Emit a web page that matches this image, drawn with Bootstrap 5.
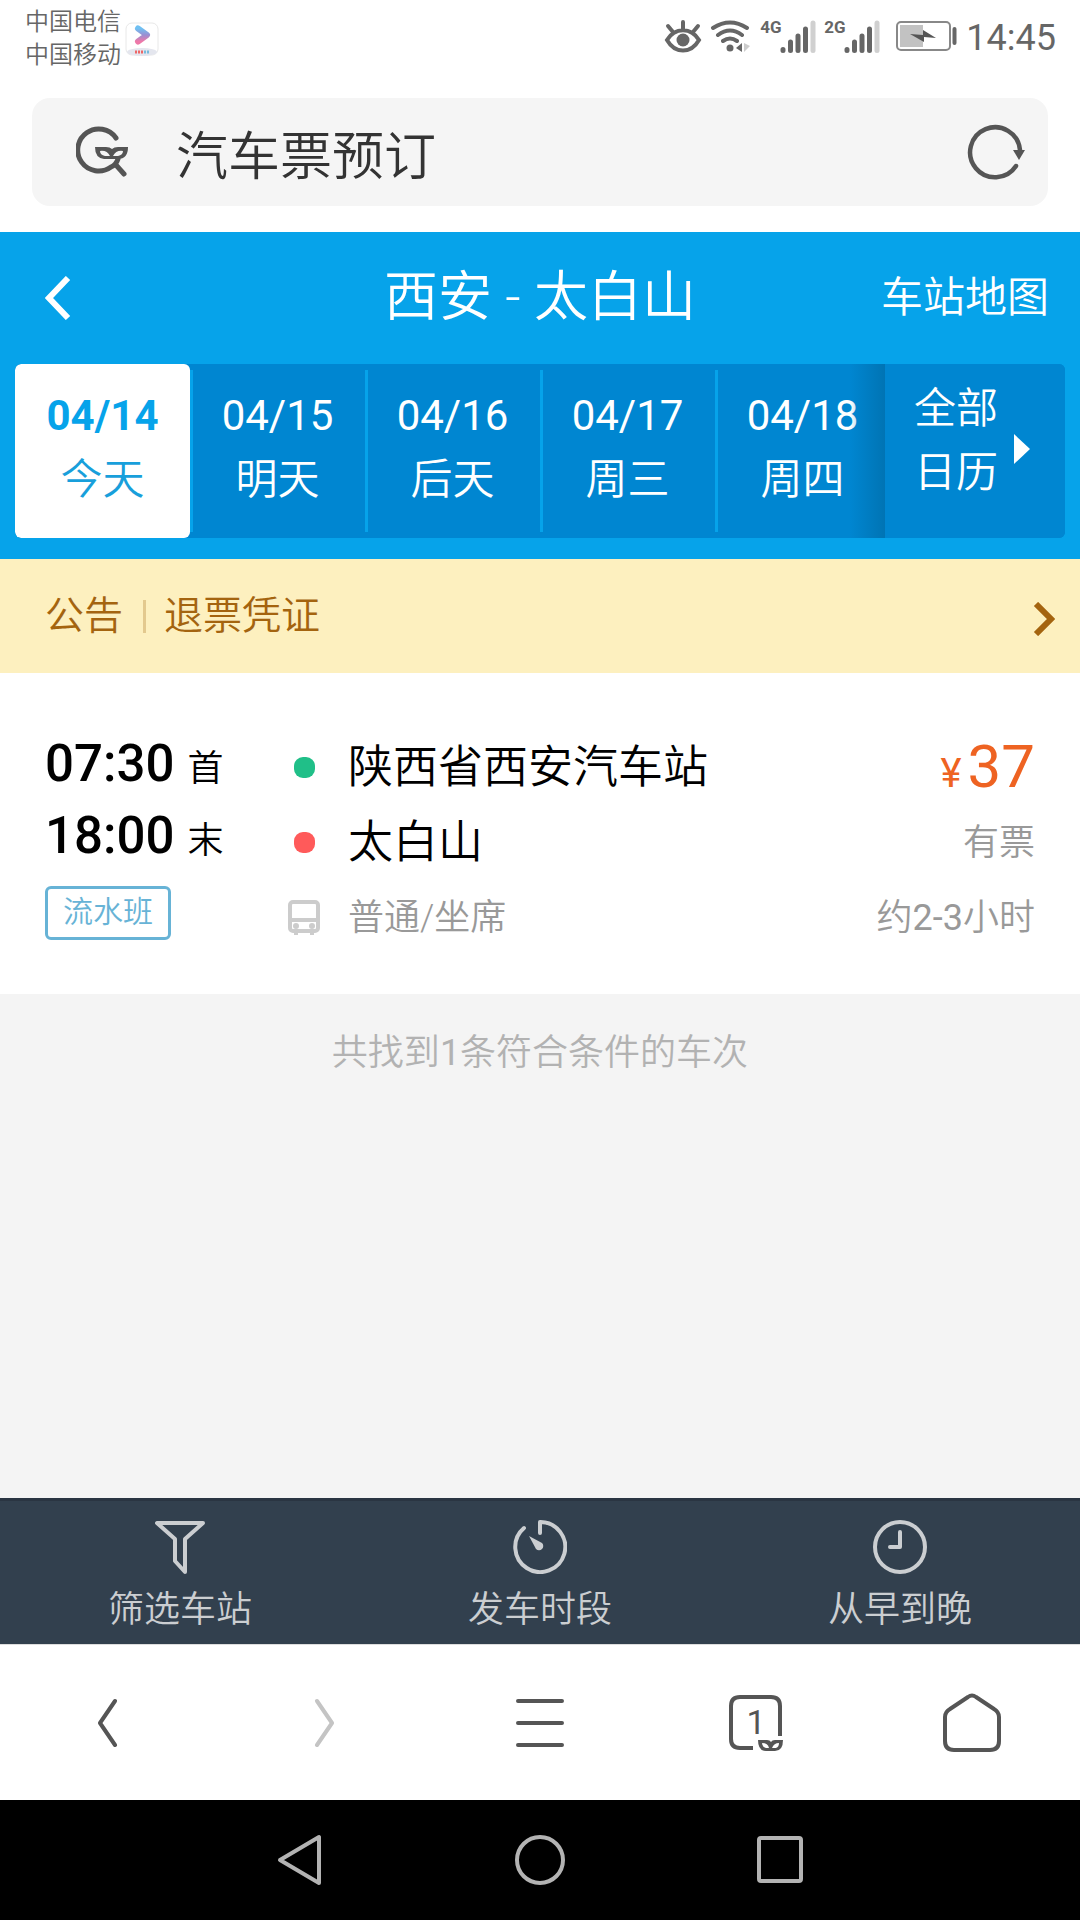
<!DOCTYPE html>
<html lang="zh-CN">
<head>
<meta charset="utf-8">
<meta name="viewport" content="width=device-width, initial-scale=1">
<title>汽车票预订</title>
<link href="https://cdn.jsdelivr.net/npm/bootstrap@5.3.0/dist/css/bootstrap.min.css" rel="stylesheet">
<style>
body{font-family:Roboto,"Noto Sans CJK SC",sans-serif;font-size:36px;line-height:48px;color:#000;background:#f4f4f4}
svg{display:block;flex:none}
button{background:none;border:0;padding:0;color:inherit;line-height:inherit;display:flex;align-items:center;justify-content:center}
a{color:inherit;text-decoration:none}
.cn{font-weight:350}
.status{height:74px;padding:6px 24px 0 25px;color:#666}
.carriers{font-size:24px;line-height:33px}
.clock{font-size:36px;padding-top:3px}
.net{font:700 17px/20px Roboto,sans-serif;width:20px;margin:11px 0 0 8px}
.search-wrap{padding:24px 32px 26px}
.search{height:108px;border-radius:18px;background:#f5f5f5;padding:0 22px 0 44px;color:#555}
.search input{font-size:52px;line-height:60px;color:#333;border:0;background:none;outline:0;padding:12px 0 0;margin-left:46px;min-width:0}
.topbar{background:#06a3ea;color:#fff;padding:0 15px 21px}
.title-row{height:132px;padding:0 16px}
.title-row h1{font-size:54px;line-height:60px;margin:0}
.back{padding-left:14px}
.f42{font-size:42px}
.dates{background:#0086d1;border-radius:6px;height:174px;overflow:hidden}
.strip{margin-right:-10px}
.day{font-size:42px;line-height:64px;padding-bottom:6px;flex:1 1 0;flex-direction:column;background:linear-gradient(#06a3ea,#06a3ea) 0 6px/3px calc(100% - 12px) no-repeat}
.day.on{background:#fff;color:#189fdb;border-radius:6px}
.day.on b{font-weight:700;color:#06a3ea}
.all{width:215px;padding-left:35px;font-size:42px;line-height:64px;background:linear-gradient(90deg,#0086d100,#0074b4) 0 0/35px 100% no-repeat;margin-left:-30px;position:relative}
.all-in{background:#0086d1;height:174px;width:180px;gap:16px;padding:0 6px 20px 0}
.all-in svg{margin-top:16px}
.notice{background:#fdf0bf;color:#a4640f;height:114px;padding:0 25px 0 45px;font-size:39px}
.notice svg{margin-top:5px}
.bar{width:3px;height:33px;background:#e3c98e;margin:0 18px 0 20px}
.trip{background:#fff;padding:55px 45px 39px}
.times{width:243px;font-size:51px;line-height:72px;font-weight:500}
.times small{font-size:36px;line-height:36px;margin-left:13px}
.tag{border:3px solid #67b3d6;border-radius:6px;color:#67b3d6;font-size:30px;line-height:46px;padding:0 15px 2px;margin-top:14px}
.stops{padding-top:2px}
.stop{height:75px;font-size:45px}
.mark-col{width:32px;margin-right:28px}
.dot{width:21px;height:21px;border-radius:9px}
.dot.from{background:#20bf88}
.dot.to{background:#ff5a5a}
.fs-36{font-size:36px}
.muted{color:#999}
.cost{color:#ee6322;padding-top:6px}
.cost b{font-size:60px;font-weight:400}
.cost i{font-size:40px;font-style:normal;margin-right:6px}
.count{color:#b2b2b2;padding-top:35px}
.filters{background:#32404e;border-top:3px solid #2a3542;height:146px;color:#cbced1}
.filters button{flex-direction:column;gap:12px;padding-top:9px}
.browser{height:156px;background:#fff;border-top:1px solid #ddd;color:#555}
.sysnav{height:120px;background:#000;gap:190px;color:#b3b3b3}
</style>
</head>
<body class="d-flex flex-column min-vh-100">
<header class="bg-white">
  <div class="status d-flex justify-content-between">
    <div class="d-flex align-items-start">
      <div class="carriers cn">中国电信<br>中国移动</div>
      <svg class="ms-1 mt-3" width="35" height="35" viewBox="0 0 35 35"><defs><linearGradient id="p" x1="0" y1="0" x2="0" y2="1"><stop offset="0" stop-color="#6fc0f2"/><stop offset=".5" stop-color="#9a8fd2"/><stop offset="1" stop-color="#ee78a8"/></linearGradient></defs><rect x="1" y="1" width="32" height="32" rx="6" fill="#fff" stroke="#e8e8e8"/><path d="M13 6.500 22 13 13 19.500" fill="none" stroke="url(#p)" stroke-width="6" stroke-linecap="round" stroke-linejoin="round"/><ellipse cx="17" cy="30" rx="15" ry="4" fill="#e4e6ee"/><path d="M10 30h8" stroke="#e66" stroke-width="3" stroke-dasharray="2 1"/><path d="M19 30h6" stroke="#7bd" stroke-width="3" stroke-dasharray="2 1"/></svg>
    </div>
    <div class="d-flex align-items-center pb-2">
      <svg width="38" height="36" viewBox="0 0 38 36" fill="none" stroke="currentColor" stroke-width="4" stroke-linecap="round"><path d="M3 22C11 9 27 9 35 22 27 36 11 36 3 22ZM19 12V4M9 14 4 8M29 14l5-6"/><circle cx="19" cy="22" r="6.500" fill="currentColor" stroke="none"/></svg>
      <svg class="ms-2" width="42" height="36" viewBox="0 0 42 36" fill="none" stroke="currentColor" stroke-width="4" stroke-linecap="round"><path d="M3 10Q20 -1 37 10M8 17Q20 8 32 17M13 23Q20 18 27 23"/><circle cx="20" cy="30" r="3.500" fill="currentColor" stroke="none"/><path d="M32 25v9l-6-4z" fill="currentColor" stroke="none"/><path d="M34 25v9l6-6z" fill="#ccc" stroke="none"/></svg>
      <span class="net align-self-start">4G</span>
      <svg width="36" height="36" viewBox="0 0 36 36" stroke="currentColor" stroke-width="5" stroke-linecap="round"><path d="M3 31.500v1M10.500 24v8.500M18 18v14.500M25.500 11v21.500"/><path d="M33 5v27.500" stroke="#d0d0d0"/></svg>
      <span class="net align-self-start">2G</span>
      <svg width="36" height="36" viewBox="0 0 36 36" stroke="currentColor" stroke-width="5" stroke-linecap="round"><path d="M3 31.500v1M10.500 24v8.500M18 18v14.500M25.500 11v21.500"/><path d="M33 5v27.500" stroke="#d0d0d0"/></svg>
      <svg class="ms-3" width="62" height="30" viewBox="0 0 62 30"><rect x="1" y="1" width="53" height="28" rx="4" fill="none" stroke="#888" stroke-width="2"/><path d="M4 4h23v22H4z" fill="#c2c2c2"/><path d="M14 13 27 14V9L40 17 28 16V21Z" fill="#555"/><path d="M58.500 8v14" stroke="#666" stroke-width="4" stroke-linecap="round"/></svg>
      <time class="clock ms-2">14:45</time>
    </div>
  </div>
  <div class="search-wrap">
    <form class="search d-flex align-items-center">
      <label for="q" aria-label="搜索"><svg width="54" height="54" viewBox="0 0 54 54" fill="none" stroke="currentColor" stroke-width="5" stroke-linecap="round"><path d="M40 13A21 21 0 1 0 35 42Q40 40 42 34M40 40l8 9"/><path fill="currentColor" stroke="none" d="M19 22H30Q34 22 36 24 38 22 42 22H52Q52 34 42 34H28Q19 33 19 22Z"/><path fill="#f5f5f5" stroke="none" d="M24 26Q31 25 34 31H29Q24 30 24 26ZM47 26Q40 25 37 31H42Q47 30 47 26Z"/></svg></label>
      <input id="q" class="flex-grow-1 cn" type="text" value="汽车票预订">
      <button type="button" aria-label="刷新"><svg width="60" height="56" viewBox="0 0 60 56"><path d="M50 42A25 25 0 1 1 54 26" fill="none" stroke="currentColor" stroke-width="4.500" stroke-linecap="round"/><path d="M47 26h12l-6 10z" fill="currentColor"/></svg></button>
    </form>
  </div>
</header>
<section class="topbar">
  <div class="title-row row g-0 align-items-center">
    <div class="col-3 back"><a href="#" aria-label="返回"><svg width="26" height="44" viewBox="0 0 26 44"><path d="M23 2 4 22 23 42" fill="none" stroke="#fff" stroke-width="6"/></svg></a></div>
    <h1 class="col-6 text-center cn">西安 - 太白山</h1>
    <div class="col-3 text-end f42 cn"><a href="#">车站地图</a></div>
  </div>
  <div class="dates d-flex">
    <div class="strip d-flex flex-grow-1">
      <button class="day on"><b>04/14</b><span class="cn">今天</span></button>
      <button class="day"><span>04/15</span><span class="cn">明天</span></button>
      <button class="day"><span>04/16</span><span class="cn">后天</span></button>
      <button class="day"><span>04/17</span><span class="cn">周三</span></button>
      <button class="day"><span>04/18</span><span class="cn">周四</span></button>
    </div>
    <button class="all"><span class="all-in d-flex align-items-center justify-content-center"><span class="cn">全部<br>日历</span><svg width="16" height="30" viewBox="0 0 16 30"><path d="M0 0 16 15 0 30z" fill="#fff"/></svg></span></button>
  </div>
</section>
<a href="#" class="notice cn d-flex align-items-center"><span>公告</span><span class="bar"></span><span>退票凭证</span><svg class="ms-auto" width="22" height="34" viewBox="0 0 22 34"><path d="M3 2 18 17 3 32" fill="none" stroke="currentColor" stroke-width="6"/></svg></a>
<article class="trip d-flex">
  <div class="times"><div>07:30<small class="cn">首</small></div><div>18:00<small class="cn">末</small></div><div class="d-flex"><span class="tag cn">流水班</span></div></div>
  <div class="stops flex-grow-1">
    <div class="stop d-flex align-items-center"><span class="mark-col d-flex justify-content-center"><span class="dot from"></span></span><span class="cn">陕西省西安汽车站</span><span class="cost ms-auto"><i>¥</i><b>37</b></span></div>
    <div class="stop d-flex align-items-center"><span class="mark-col d-flex justify-content-center"><span class="dot to"></span></span><span class="cn">太白山</span><span class="ms-auto muted fs-36 cn">有票</span></div>
    <div class="stop d-flex align-items-center muted fs-36"><span class="mark-col"><svg width="32" height="36" viewBox="0 0 32 36" fill="none" stroke="#ccc" stroke-width="4"><rect x="2" y="2" width="28" height="29" rx="3"/><path d="M4 20h24"/><circle cx="8" cy="26" r="3" fill="#ccc" stroke="none"/><circle cx="24" cy="26" r="3" fill="#ccc" stroke="none"/><path d="M6 33h4M22 33h4"/></svg></span><span class="cn">普通/坐席</span><span class="ms-auto"><span class="cn">约</span>2-3<span class="cn">小时</span></span></div>
  </div>
</article>
<main class="count flex-grow-1 text-center"><span class="cn">共找到</span>1<span class="cn">条符合条件的车次</span></main>
<footer>
  <div class="filters row g-0">
    <button class="col-4 cn"><svg width="54" height="54" viewBox="0 0 54 54" fill="none" stroke="currentColor" stroke-width="4" stroke-linejoin="round"><path d="M4 3H50L32 19V52L22 41V19Z"/></svg>筛选车站</button>
    <button class="col-4 cn"><svg width="54" height="54" viewBox="0 0 54 54" fill="none" stroke="currentColor" stroke-width="4" stroke-linecap="round" stroke-linejoin="round"><path d="M27 13V2A25 25 0 1 1 11 8"/><path d="M16 16 29 23a4 4 0 1 1-6 6Z" fill="currentColor" stroke="none"/></svg>发车时段</button>
    <button class="col-4 cn"><svg width="54" height="54" viewBox="0 0 54 54" fill="none" stroke="currentColor" stroke-width="4" stroke-linecap="round" stroke-linejoin="round"><circle cx="27" cy="27" r="25"/><path d="M27 12V27H17"/></svg>从早到晚</button>
  </div>
  <nav class="browser d-flex">
    <button class="col" aria-label="后退"><svg width="20" height="50" viewBox="0 0 20 50" fill="none" stroke="currentColor" stroke-width="4" stroke-linecap="round" stroke-linejoin="round"><path d="M17 3 2 25 17 47"/></svg></button>
    <button class="col" aria-label="前进"><svg width="20" height="50" viewBox="0 0 20 50" fill="none" stroke="#c4c4c4" stroke-width="4" stroke-linecap="round" stroke-linejoin="round"><path d="M3 3 18 25 3 47"/></svg></button>
    <button class="col" aria-label="菜单"><svg width="50" height="50" viewBox="0 0 50 50" stroke="currentColor" stroke-width="4" stroke-linecap="round"><path d="M3 3H47M3 25H47M3 47H47"/></svg></button>
    <button class="col" aria-label="窗口"><svg width="56" height="58" viewBox="0 0 56 58" fill="none" stroke="currentColor" stroke-width="4"><path d="M52 42V12Q52 3 43 3H12Q3 3 3 12V45Q3 54 12 54H25"/><text x="28" y="40" text-anchor="middle" font-family="Roboto,sans-serif" font-size="34" font-weight="400" fill="#555" stroke="none">1</text><path fill="currentColor" stroke="none" d="M30 46H39Q42 46 43 48 44 46 47 46H55Q55 57 47 57H38Q30 57 30 46Z"/><path fill="#fff" stroke="none" d="M34 49Q40 49 41 54H38Q34 53 34 49ZM51 49Q46 49 44 54H48Q51 53 51 49Z"/></svg></button>
    <button class="col" aria-label="主页"><svg width="58" height="60" viewBox="0 0 58 60" fill="none" stroke="currentColor" stroke-width="4" stroke-linejoin="round"><path d="M2 24Q2 19 7 16L25 4Q29 1 33 4L51 16Q56 19 56 24V48Q56 57 47 57H11Q2 57 2 48Z"/></svg></button>
  </nav>
  <nav class="sysnav d-flex align-items-center justify-content-center">
    <button aria-label="返回"><svg width="50" height="54" viewBox="0 0 50 54" fill="none" stroke="currentColor" stroke-width="4" stroke-linejoin="round"><path d="M44 4V50L5 27Z"/></svg></button>
    <button aria-label="主屏幕"><svg width="50" height="50" viewBox="0 0 50 50" fill="none" stroke="currentColor" stroke-width="4"><circle cx="25" cy="25" r="23"/></svg></button>
    <button aria-label="最近任务"><svg width="50" height="50" viewBox="0 0 50 50" fill="none" stroke="currentColor" stroke-width="4"><rect x="4" y="3" width="42" height="43" rx="2"/></svg></button>
  </nav>
</footer>
<script src="https://cdn.jsdelivr.net/npm/bootstrap@5.3.0/dist/js/bootstrap.bundle.min.js"></script>
</body>
</html>
